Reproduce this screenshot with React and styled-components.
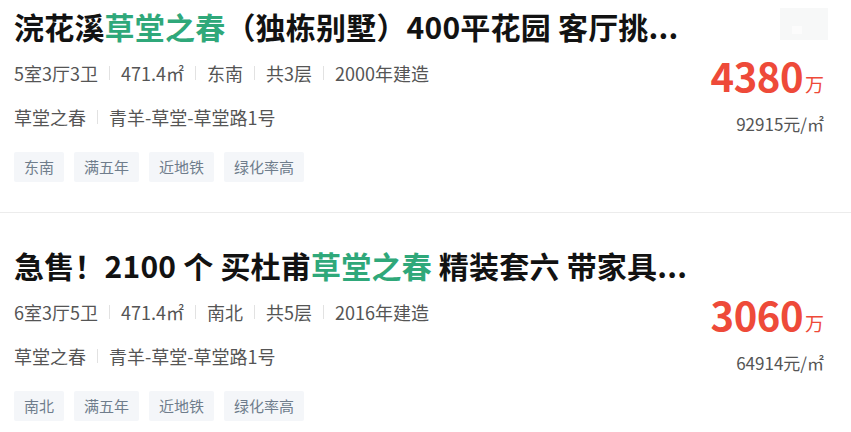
import React from 'react';
import styled, { createGlobalStyle } from 'styled-components';

const GlobalStyle = createGlobalStyle`
  html, body {
    margin: 0;
    padding: 0;
    background: #fff;
  }
  body {
    font-family: "Noto Sans CJK SC", "Noto Sans", sans-serif;
    -webkit-font-smoothing: antialiased;
  }
`;

const List = styled.ul`
  list-style: none;
  margin: 0;
  padding: 0;
  width: 851px;
`;

const Card = styled.li`
  position: relative;
  display: flex;
  justify-content: space-between;
  padding: ${(p) => (p.first ? '6px' : '32px')} 27px 30px 14px;
  border-bottom: 1px solid #ececec;
`;

const Info = styled.div`
  display: flex;
  flex-direction: column;
  min-width: 0;
`;

const Title = styled.h2`
  margin: 0;
  font-size: 30px;
  line-height: 40px;
  font-weight: 700;
  color: #121212;
  white-space: nowrap;
  letter-spacing: 0.2px;
`;

const Highlight = styled.span`
  color: #2fa87a;
`;

const Row = styled.div`
  display: flex;
  align-items: center;
  margin-top: ${(p) => p.gap || 0}px;
  height: 24px;
  font-size: 18px;
  color: #555;
  white-space: nowrap;
`;

const Sep = styled.i`
  display: inline-block;
  width: 1px;
  height: 14px;
  margin: 0 11px;
  background: #e2e2e2;
`;

const Tags = styled.div`
  display: flex;
  gap: 10px;
  margin-top: 23px;
`;

const Tag = styled.span`
  height: 30px;
  line-height: 30px;
  padding: 0 10px;
  font-size: 15px;
  color: #6f7d8c;
  background: #f4f6f9;
  border-radius: 2px;
`;

const Side = styled.div`
  display: flex;
  flex-direction: column;
  align-items: flex-end;
  padding-top: 45px;
`;

const Price = styled.div`
  display: flex;
  align-items: baseline;
  color: #ee4a39;
  line-height: 48px;
`;

const Amount = styled.span`
  font-size: 40px;
  font-weight: 700;
  letter-spacing: -0.5px;
`;

const Unit = styled.span`
  margin-left: 2px;
  font-size: 19px;
  font-weight: 400;
`;

const UnitPrice = styled.div`
  margin-top: 3px;
  font-size: 17px;
  color: #555;
`;

const Thumb = styled.div`
  position: absolute;
  top: 8px;
  right: 23px;
  width: 48px;
  height: 32px;
  background: #f7f8f8;

  &::after {
    content: '';
    position: absolute;
    left: 12px;
    bottom: 6px;
    width: 10px;
    height: 8px;
    background: #fcfcfc;
  }
`;

const houses = [
  {
    title: ['浣花溪', '草堂之春', '（独栋别墅）400平花园 客厅挑...'],
    meta: ['5室3厅3卫', '471.4㎡', '东南', '共3层', '2000年建造'],
    dir: '东南',
    price: '4380',
    unit: '92915元/㎡',
    thumb: true,
  },
  {
    title: ['急售！2100 个 买杜甫', '草堂之春', ' 精装套六 带家具...'],
    meta: ['6室3厅5卫', '471.4㎡', '南北', '共5层', '2016年建造'],
    dir: '南北',
    price: '3060',
    unit: '64914元/㎡',
  },
];

const joinWithSep = (items) =>
  items.map((item, i) => (
    <React.Fragment key={item}>
      {i > 0 && <Sep />}
      <span>{item}</span>
    </React.Fragment>
  ));

const App = () => (
  <>
    <GlobalStyle />
    <List>
      {houses.map((h, idx) => (
        <Card key={h.price} first={idx === 0}>
          {h.thumb && <Thumb />}
          <Info>
            <Title>
              {h.title[0]}
              <Highlight>{h.title[1]}</Highlight>
              {h.title[2]}
            </Title>
            <Row gap={15}>{joinWithSep(h.meta)}</Row>
            <Row gap={20}>{joinWithSep(['草堂之春', '青羊-草堂-草堂路1号'])}</Row>
            <Tags>
              {[h.dir, '满五年', '近地铁', '绿化率高'].map((t) => (
                <Tag key={t}>{t}</Tag>
              ))}
            </Tags>
          </Info>
          <Side>
            <Price>
              <Amount>{h.price}</Amount>
              <Unit>万</Unit>
            </Price>
            <UnitPrice>{h.unit}</UnitPrice>
          </Side>
        </Card>
      ))}
    </List>
  </>
);

export default App;
